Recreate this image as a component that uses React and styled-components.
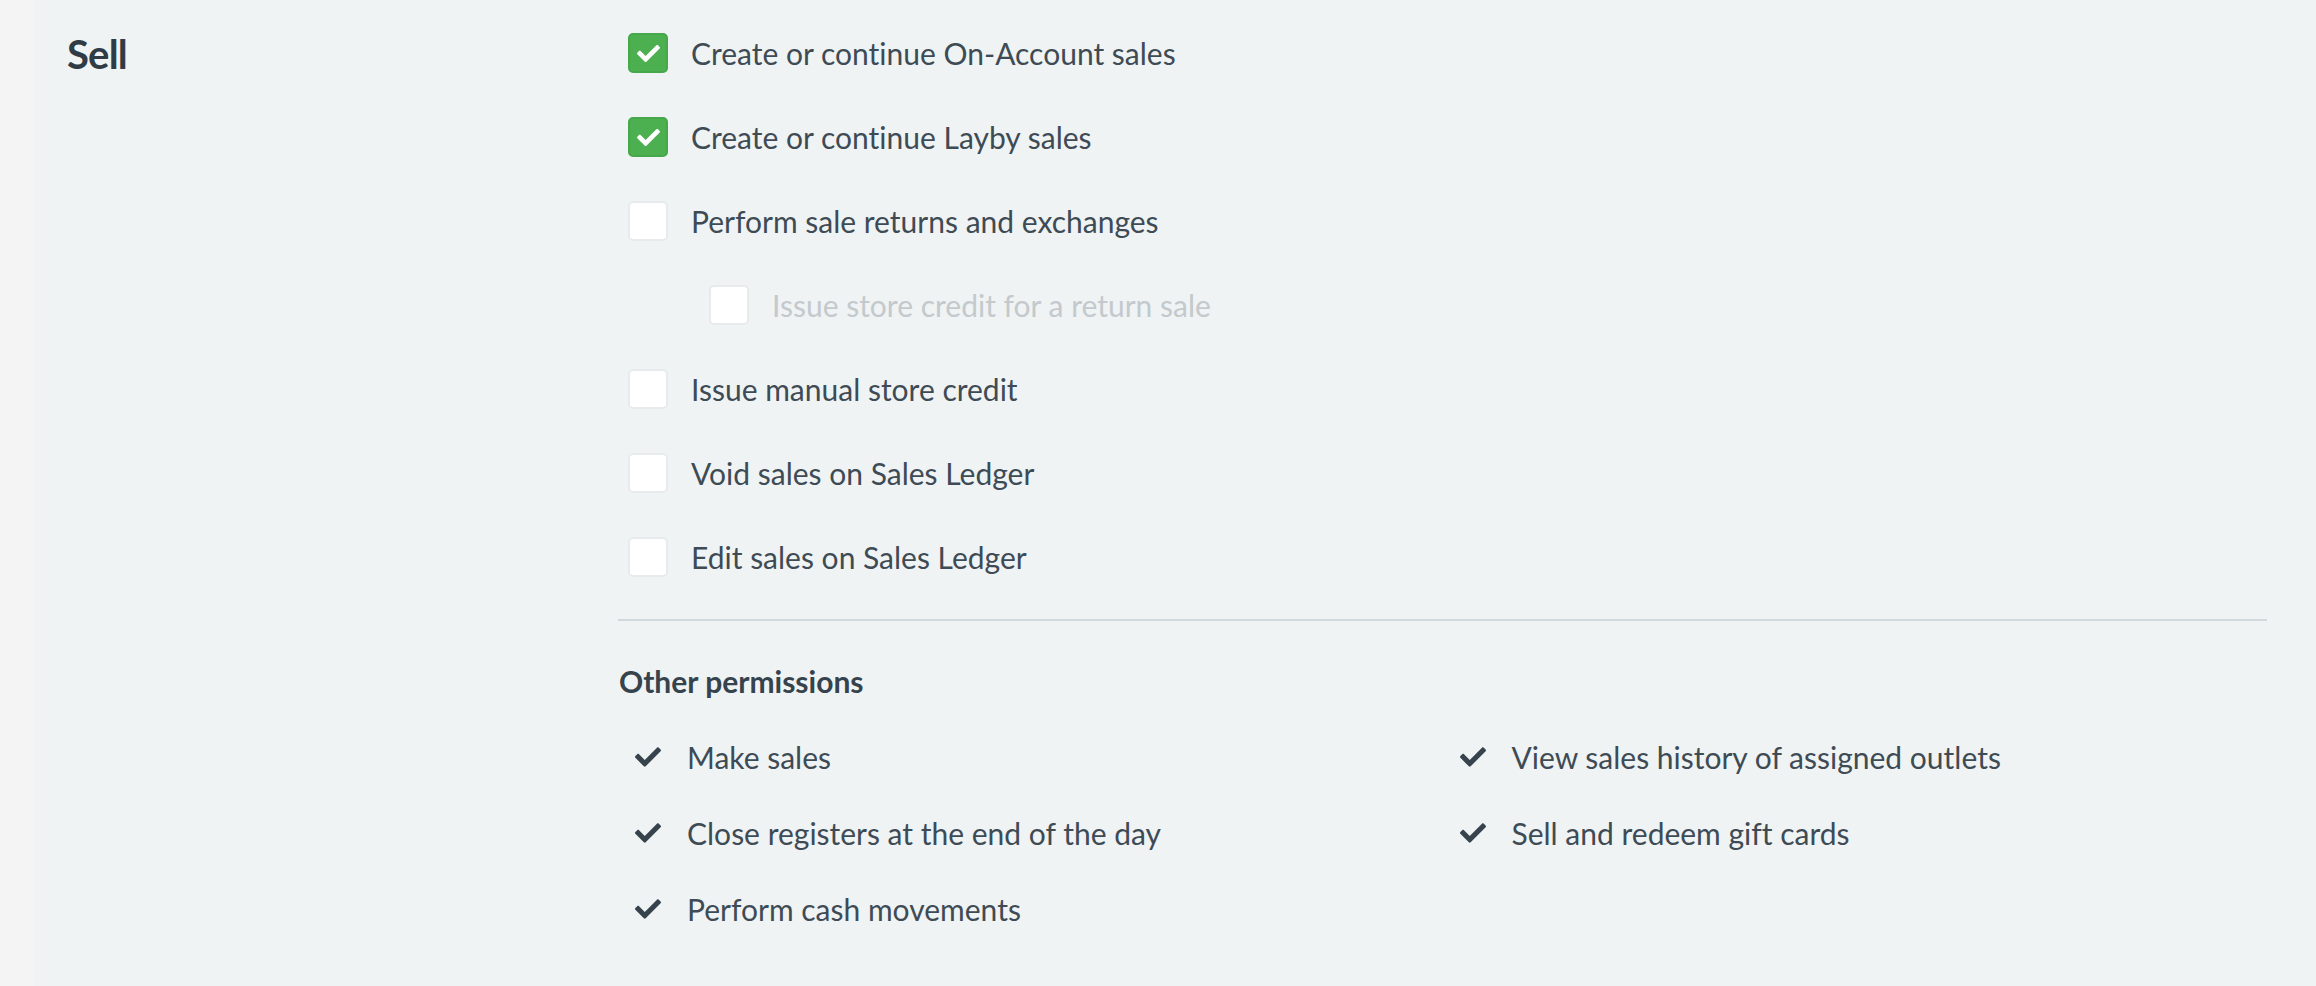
import React from "react";
import styled, { createGlobalStyle } from "styled-components";

const GlobalStyle = createGlobalStyle`
  html, body { margin: 0; padding: 0; background: #f4f4f4; }
  body {
    font-family: Lato, "Open Sans", sans-serif;
    -webkit-font-smoothing: antialiased;
    font-variant-ligatures: no-common-ligatures;
  }
`;

const Page = styled.div`
  display: flex;
  min-height: 986px;
  background: #f4f4f4;
`;

const Gutter = styled.div`
  width: 34px;
  flex: none;
  background: #f4f4f4;
`;

const Panel = styled.section`
  flex: 1;
  background: #eff3f4;
  display: grid;
  grid-template-columns: 551px 1fr;
  padding: 0 49px 0 33px;
`;

const SectionTitle = styled.h2`
  margin: 0;
  padding-top: 26px;
  font-family: Lato, sans-serif;
  font-weight: 700;
  font-size: 40px;
  letter-spacing: -0.8px;
  line-height: 56px;
  color: #2f3c46;
`;

const Content = styled.div`
  display: flex;
  flex-direction: column;
`;

const CheckList = styled.ul`
  list-style: none;
  margin: 0;
  padding: 33px 0 0 10px;
  display: flex;
  flex-direction: column;
  gap: 44px;
`;

const CheckRow = styled.li`
  display: flex;
  align-items: center;
  gap: 23px;
  height: 40px;
  padding-left: ${(p) => (p.$indent ? "81px" : "0")};
`;

const Box = styled.span`
  width: 40px;
  height: 40px;
  box-sizing: border-box;
  flex: none;
  border-radius: 5px;
  display: flex;
  align-items: center;
  justify-content: center;
  background: ${(p) => (p.$checked ? "#4caf50" : "#ffffff")};
  border: 2px solid ${(p) => (p.$checked ? "#47a84b" : "#e7ebec")};
`;

const Label = styled.span`
  font-size: 30px;
  line-height: 40px;
  color: ${(p) => (p.$disabled ? "#c3c9cc" : "#3e4b55")};
  white-space: nowrap;
`;

const Divider = styled.hr`
  border: none;
  height: 2px;
  background: #d1d9dc;
  margin: 42px 0 0 0;
`;

const SubTitle = styled.h3`
  margin: 40px 0 0 1px;
  font-size: 30px;
  line-height: 40px;
  font-weight: 700;
  color: #36434d;
`;

const OtherGrid = styled.ul`
  list-style: none;
  margin: 36px 0 0 0;
  padding: 0;
  display: grid;
  grid-template-columns: 1fr 1fr;
  row-gap: 36px;
`;

const OtherItem = styled.li`
  display: flex;
  align-items: center;
  gap: 26px;
  padding-left: 17px;
  height: 40px;
  font-size: 30px;
  line-height: 40px;
  color: #3e4b55;
  white-space: nowrap;
`;

const CheckIcon = ({ color, size }) => (
  <svg width={size} height={size} viewBox="0 0 512 512" aria-hidden="true">
    <path
      fill={color}
      d="M173.898 439.404l-166.4-166.4c-9.997-9.997-9.997-26.206 0-36.204l36.203-36.204c9.997-9.998 26.207-9.998 36.204 0L192 312.69 432.095 72.596c9.997-9.997 26.207-9.997 36.204 0l36.203 36.204c9.997 9.997 9.997 26.206 0 36.204l-294.4 294.401c-9.998 9.997-26.207 9.997-36.204-.001z"
    />
  </svg>
);

const permissions = [
  { label: "Create or continue On-Account sales", checked: true },
  { label: "Create or continue Layby sales", checked: true },
  { label: "Perform sale returns and exchanges" },
  { label: "Issue store credit for a return sale", indent: true, disabled: true },
  { label: "Issue manual store credit" },
  { label: "Void sales on Sales Ledger" },
  { label: "Edit sales on Sales Ledger" },
];

const others = [
  "Make sales",
  "View sales history of assigned outlets",
  "Close registers at the end of the day",
  "Sell and redeem gift cards",
  "Perform cash movements",
];

export default function App() {
  return (
    <>
      <GlobalStyle />
      <Page>
        <Gutter />
        <Panel>
          <div>
            <SectionTitle>Sell</SectionTitle>
          </div>
          <Content>
            <CheckList>
              {permissions.map((p) => (
                <CheckRow key={p.label} $indent={p.indent}>
                  <Box $checked={p.checked}>
                    {p.checked && <CheckIcon color="#ffffff" size={23} />}
                  </Box>
                  <Label $disabled={p.disabled}>{p.label}</Label>
                </CheckRow>
              ))}
            </CheckList>
            <Divider />
            <SubTitle>Other permissions</SubTitle>
            <OtherGrid>
              {others.map((o) => (
                <OtherItem key={o}>
                  <CheckIcon color="#36434d" size={26} />
                  {o}
                </OtherItem>
              ))}
            </OtherGrid>
          </Content>
        </Panel>
      </Page>
    </>
  );
}
